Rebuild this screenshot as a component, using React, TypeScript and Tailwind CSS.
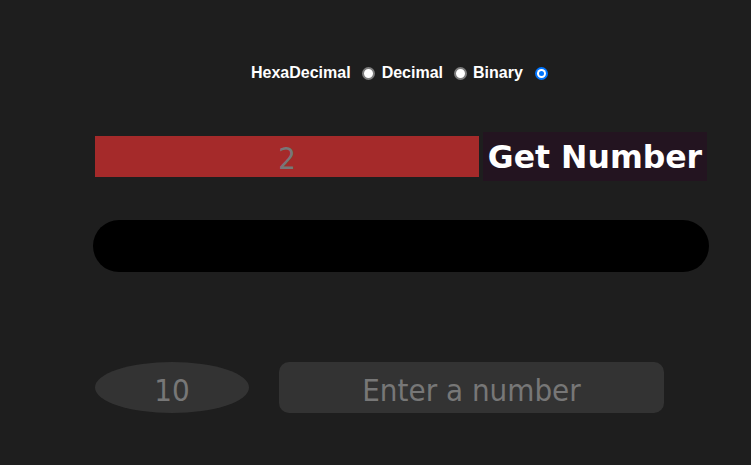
import React from "react";

function Radio({ checked, className }: { checked?: boolean; className: string }) {
  if (checked) {
    return (
      <span className={`${className} w-[13px] h-[13px] rounded-full bg-[#0075ff] flex items-center justify-center`}>
        <span className="w-[9px] h-[9px] rounded-full bg-white flex items-center justify-center">
          <span className="w-[5px] h-[5px] rounded-full bg-[#0075ff]" />
        </span>
      </span>
    );
  }
  return <span className={`${className} w-[13px] h-[13px] rounded-full bg-white border-[2px] border-[#7d7d7d]`} />;
}

export default function App() {
  const sans = { fontFamily: '"Liberation Sans", Arial, sans-serif' };
  const tah = { fontFamily: '"DejaVu Sans Condensed", "DejaVu Sans", Verdana, sans-serif', fontStretch: "condensed" as const };
  const verd = { fontFamily: '"DejaVu Sans", Verdana, sans-serif' };
  return (
    <div className="w-[751px] h-[465px] bg-[#1e1e1e] overflow-hidden flex flex-col pt-[64px]">
      <div className="h-[18px] flex items-center pl-[251px] text-white font-bold text-[16px] leading-[18px]" style={sans}>
        <span>HexaDecimal</span>
        <Radio className="ml-[11px]" />
        <span className="ml-[7px]">Decimal</span>
        <Radio className="ml-[11px]" />
        <span className="ml-[6px]">Binary</span>
        <Radio className="ml-[12px]" checked />
      </div>

      <div className="mt-[50px] h-[49px] flex items-center pl-[95px]">
        <div className="w-[384px] h-[41px] bg-[#a52a2a] flex items-center justify-center pt-[4px] text-[31px] text-[#777]" style={tah}>
          2
        </div>
        <div className="ml-[4px] w-[224px] h-[49px] bg-[#231420] flex items-center justify-center pt-[3px] text-white font-bold text-[31.5px]" style={verd}>
          Get Number
        </div>
      </div>

      <div className="mt-[39px] ml-[93px] w-[616px] h-[52px] rounded-full bg-black" />

      <div className="mt-[90px] h-[51px] flex items-center pl-[95px]">
        <div className="w-[154px] h-[51px] rounded-[50%] bg-[#333] flex items-center justify-center pt-[5px] text-[31px] text-[#777]" style={tah}>
          10
        </div>
        <div className="ml-[30px] w-[385px] h-[51px] rounded-[10px] bg-[#333] flex items-center justify-center pt-[5px] text-[31px] text-[#777]" style={tah}>
          Enter a number
        </div>
      </div>
    </div>
  );
}
